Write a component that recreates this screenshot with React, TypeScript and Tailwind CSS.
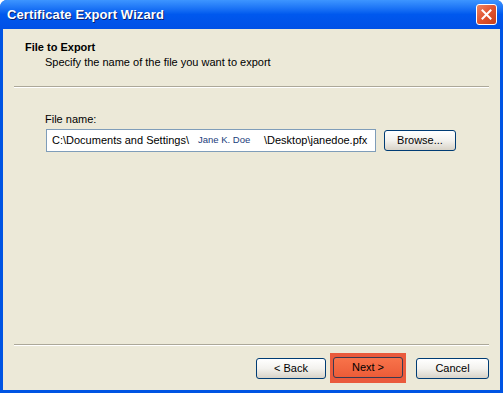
import React from "react";

// ─── XP-style pieces ──────────────────────────────────────────────────────────

const font = "font-['Liberation_Sans',Arial,sans-serif]";

const XpButton = ({
  label,
  className = "",
}: {
  label: string;
  className?: string;
}) => (
  <button
    className={`flex items-center justify-center h-[21px] rounded-[3px] border border-[#003c74] bg-gradient-to-b from-[#ffffff] via-[#f3f2ee] to-[#d8d3c8] text-[11px] text-black ${className}`}
  >
    {label}
  </button>
);

const Separator = () => (
  <div className="mx-[11px] h-[2px] border-t border-t-[#aca899] border-b border-b-white" />
);

export default function App() {
  return (
    <div
      className={`w-[503px] h-[393px] flex flex-col bg-[#0054e3] rounded-t-[7px] overflow-hidden ${font}`}
    >
      {/* Title bar */}
      <div className="h-[29px] flex items-center justify-between pl-[7px] pr-[6px] bg-gradient-to-b from-[#3d95ff] via-[#0058ee] to-[#0050e6] shrink-0">
        <span className="text-[13px] font-bold text-white [text-shadow:1px_1px_0_#0a1f6e] tracking-[0.1px]">
          Certificate Export Wizard
        </span>
        <div className="w-[21px] h-[21px] rounded-[3px] border border-white bg-gradient-to-br from-[#ee8462] via-[#e0532f] to-[#c63f1a] flex items-center justify-center">
          <svg width="11" height="11" viewBox="0 0 11 11">
            <path
              d="M1.5 1.5 L9.5 9.5 M9.5 1.5 L1.5 9.5"
              stroke="white"
              strokeWidth="2"
              strokeLinecap="square"
            />
          </svg>
        </div>
      </div>

      {/* Body */}
      <div className="flex-1 flex flex-col bg-[#ece9d8] mx-[3px] mb-[3px]">
        {/* Header */}
        <div className="h-[57px] pt-[12px] pl-[22px]">
          <div className="text-[11px] leading-[13px] font-bold text-black">
            File to Export
          </div>
          <div className="text-[11px] leading-[13px] text-black pl-[20px] mt-[2px]">
            Specify the name of the file you want to export
          </div>
        </div>
        <Separator />

        {/* Content */}
        <div className="pl-[42px] pt-[25px]">
          <div className="text-[11px] leading-[13px] text-black">File name:</div>
          <div className="flex items-center mt-[3px]">
            <div className="w-[330px] h-[23px] ml-[1px] border border-[#7f9db9] bg-white flex items-center pl-[5px] text-[11px] text-black">
              <span className="w-[146px]">C:\Documents and Settings\</span>
              <span className="w-[66px] text-[9.5px] text-[#1a3d7c]">
                Jane K. Doe
              </span>
              <span>\Desktop\janedoe.pfx</span>
            </div>
            <XpButton label="Browse..." className="w-[72px] ml-[8px]" />
          </div>
        </div>

        <div className="flex-1" />
        <Separator />

        {/* Footer */}
        <div className="h-[44px] flex items-center justify-end pr-[11px]">
          <XpButton label="< Back" className="w-[70px]" />
          <div className="ml-[4px] pt-[4px] pb-[5px] px-[3px] bg-[#ea5a3c]">
            <button className="flex items-center justify-center w-[70px] h-[21px] rounded-[3px] border border-[#3a3a50] bg-gradient-to-b from-[#f8734a] to-[#ec5c38] text-[11px] text-black">
              {"Next >"}
            </button>
          </div>
          <XpButton label="Cancel" className="w-[73px] ml-[10px]" />
        </div>
      </div>
    </div>
  );
}
